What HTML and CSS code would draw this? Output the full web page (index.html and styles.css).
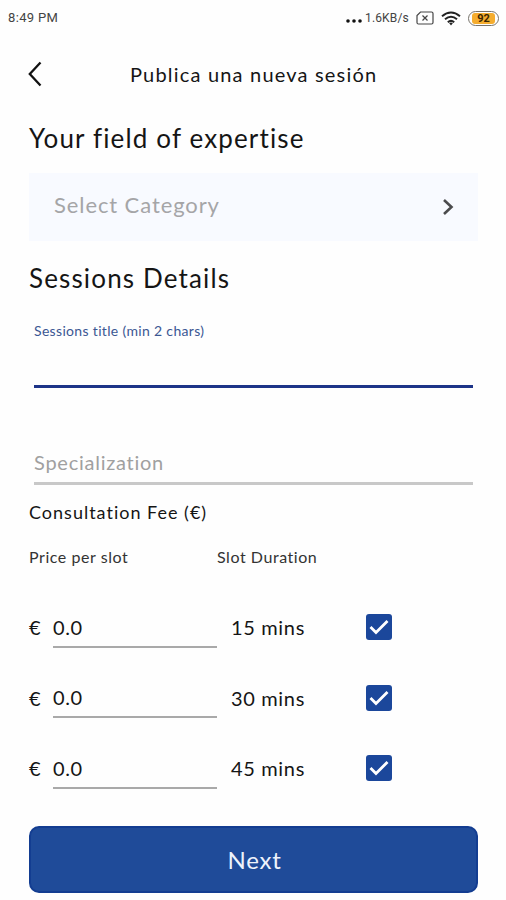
FILE: index.html
```html
<!DOCTYPE html>
<html lang="es">
<head>
<meta charset="utf-8">
<title>Publica una nueva sesión</title>
<link rel="stylesheet" href="styles.css">
</head>
<body>
<header class="status">
  <span class="clock">8:49 PM</span>
  <div class="indicators">
    <svg class="dots" width="16" height="4" viewBox="0 0 16 4"><circle cx="2" cy="2" r="1.8"/><circle cx="8" cy="2" r="1.8"/><circle cx="14" cy="2" r="1.8"/></svg>
    <span class="speed">1.6KB/s</span>
    <svg class="sim" width="18" height="14" viewBox="0 0 18 14" fill="none" stroke="#444" stroke-width="1.2"><path d="M4.5 1H15.5Q17 1 17 2.5V11.5Q17 13 15.500 13H2.500Q1 13 1 11.500V4.500Z"/><path d="M6.500 4.500L11.500 9.500M11.500 4.500L6.500 9.500"/></svg>
    <svg class="wifi" width="20" height="15" viewBox="0 0 20 15" fill="none" stroke="#222" stroke-width="2"><path d="M1 5.200Q10-2.200 19 5.200M4 8.300Q10 3.300 16 8.300M6.800 11.200Q10 8.600 13.200 11.200"/><path d="M8.200 12.200Q10 11 11.800 12.200L10 14.500Z" fill="#222" stroke="none"/></svg>
    <span class="battery"><span class="charge">92</span></span>
  </div>
</header>
<nav class="bar">
  <svg class="back" width="14" height="26" viewBox="0 0 14 26" fill="none" stroke="#111" stroke-width="2.300"><path d="M12.500 1.500L1.800 13L12.500 24.500"/></svg>
  <h1 class="title">Publica una nueva sesión</h1>
</nav>
<main class="form">
  <h2 class="heading expertise">Your field of expertise</h2>
  <div class="select">
    <span class="select-text">Select Category</span>
    <svg width="12" height="18" viewBox="0 0 12 18" fill="none" stroke="#4b4b4d" stroke-width="2.600"><path d="M2 2L9.500 9L2 16"/></svg>
  </div>
  <h2 class="heading details">Sessions Details</h2>
  <div class="field active"><label class="caption">Sessions title (min 2 chars)</label></div>
  <div class="field"><span class="placeholder">Specialization</span></div>
  <h3 class="fee">Consultation Fee (€)</h3>
  <div class="columns"><span class="col-price">Price per slot</span><span class="col-slot">Slot Duration</span></div>
  <div class="slot"><span class="euro">€</span><span class="price">0.0</span><span class="mins">15 mins</span><span class="check"><svg width="20" height="16" viewBox="0 0 20 16"><path d="M1.500 8L7 13.500L18.500 2"/></svg></span></div>
  <div class="slot"><span class="euro">€</span><span class="price">0.0</span><span class="mins">30 mins</span><span class="check"><svg width="20" height="16" viewBox="0 0 20 16"><path d="M1.500 8L7 13.500L18.500 2"/></svg></span></div>
  <div class="slot"><span class="euro">€</span><span class="price">0.0</span><span class="mins">45 mins</span><span class="check"><svg width="20" height="16" viewBox="0 0 20 16"><path d="M1.500 8L7 13.500L18.500 2"/></svg></span></div>
  <button class="next">Next</button>
</main>
</body>
</html>
```

FILE: styles.css
```css
* { box-sizing: border-box; }
body {
  margin: 0;
  background: #fefefe;
  color: #151515;
  font-family: Lato, "Open Sans", sans-serif;
  height: 900px;
  overflow: hidden;
}
h1, h2, h3 { margin: 0; font-weight: 400; }
svg { display: block; flex: none; }
span, label, h1, h2, h3 { white-space: nowrap; }

.status {
  display: flex;
  justify-content: space-between;
  align-items: center;
  height: 36px;
  padding: 0 7px 0 8px;
  font: 13px/20px Roboto, sans-serif;
  color: #444;
}
.clock { letter-spacing: 0.350px; }
.indicators { display: flex; align-items: center; }
.dots { margin: 6px 3px 0 0; fill: #111; }
.speed { width: 43px; margin-right: 8px; font-size: 12px; letter-spacing: 0.150px; }
.sim { margin-right: 7px; }
.wifi { margin-right: 7px; }
.battery {
  width: 31px;
  height: 15px;
  padding: 1px 3px;
  border: 1.500px solid #77736b;
  border-radius: 8px;
}
.charge {
  display: block;
  height: 11px;
  border-radius: 3px;
  background: #f5ad2f;
  color: #3a2500;
  font-size: 11px;
  font-weight: 700;
  line-height: 11px;
  text-align: center;
}

.bar { display: flex; align-items: center; height: 78px; padding: 0 0 2px 28px; }
.title { margin-left: 88px; font-size: 20px; letter-spacing: 1.190px; }

.form { padding: 0 28px 0 29px; }
.heading { height: 48px; font-size: 26px; line-height: 48px; letter-spacing: 1.150px; }
.select {
  display: flex;
  align-items: center;
  justify-content: space-between;
  height: 68px;
  margin: 11px 0 13px;
  padding: 0 24px 0 25px;
  background: #f8faff;
}
.select-text { padding-bottom: 5px; color: #a5a5a7; font-size: 22px; letter-spacing: 0.900px; }
.field { height: 98px; margin: 0 5px; padding-top: 62px; border-bottom: 3px solid #c8c8c8; }
.field.active { height: 67px; margin-top: 19px; padding-top: 0; border-bottom-color: #1d3488; }
.field.active + .field { height: 97px; }
.caption { display: block; color: #3b5793; font-size: 14px; line-height: 19px; letter-spacing: 0.330px; }
.placeholder { display: block; color: #a0a0a0; font-size: 20px; line-height: 24px; letter-spacing: 0.750px; }
.fee { height: 28px; margin-top: 14px; font-size: 18px; line-height: 27px; letter-spacing: 1px; }
.columns { display: flex; height: 24px; margin: 18px 0 23px; font-size: 16px; line-height: 24px; letter-spacing: 0.550px; color: #333; }
.col-price { width: 188px; }
.slot { display: flex; align-items: center; height: 70.500px; font-size: 20px; letter-spacing: 0.650px; }
.euro { width: 24px; }
.price { width: 164px; height: 41px; border-bottom: 2px solid #a9a9a9; line-height: 40px; }
.mins { width: 135px; margin-left: 14px; }
.check {
  display: grid;
  place-items: center;
  width: 26px;
  height: 26px;
  border-radius: 3px;
  background: #1b479b;
}
.check path { fill: none; stroke: #fff; stroke-width: 2.800; }
.next {
  display: block;
  width: 449px;
  height: 67px;
  margin-top: 22px;
  padding: 0 0 0 2px;
  border: 2px solid #133d91;
  border-radius: 10px;
  background: #1f4b99;
  color: #eef3fc;
  font: 24px Lato, sans-serif;
  letter-spacing: 0.800px;
}
```
